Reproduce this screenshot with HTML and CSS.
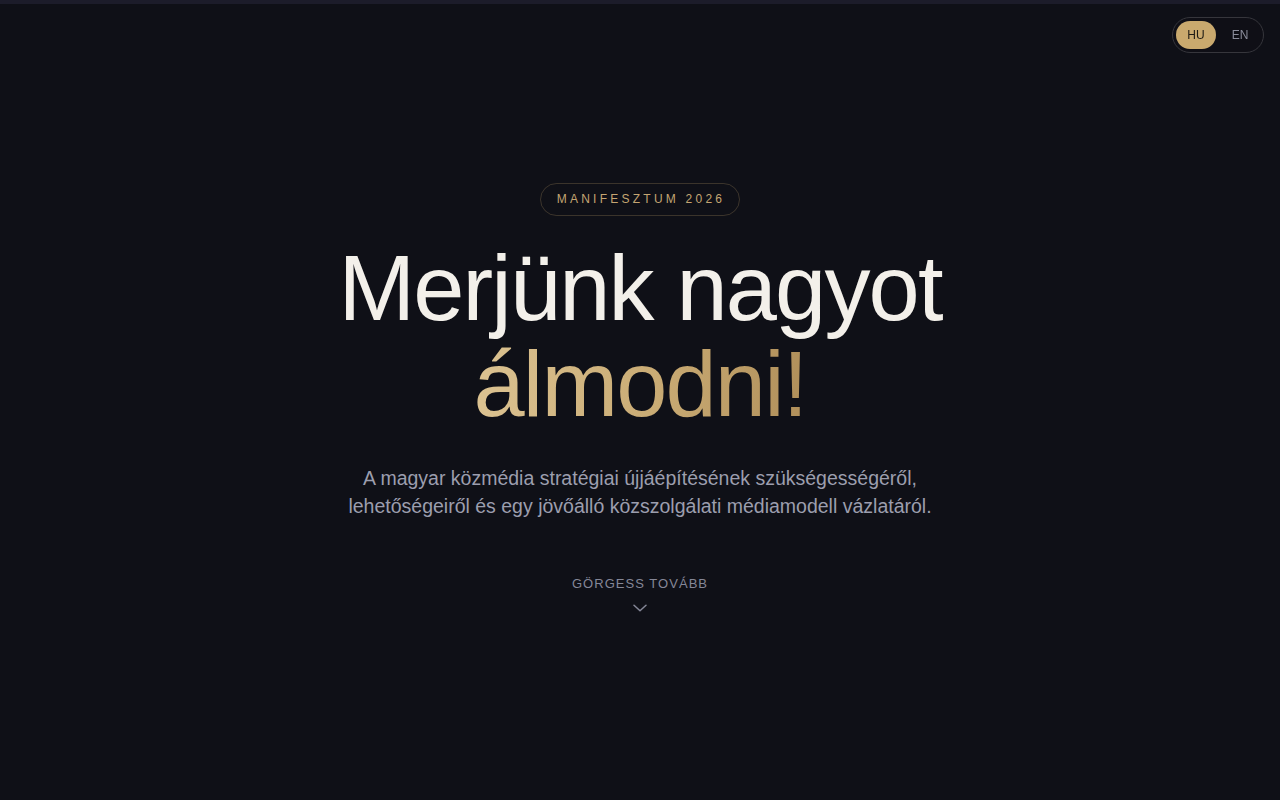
FILE: index.html
```html
<!DOCTYPE html>
<html lang="hu">
<head>
<meta charset="utf-8">
<title>Merjünk nagyot álmodni!</title>
<link rel="stylesheet" href="styles.css">
</head>
<body>
<div class="progress"></div>
<div class="lang">
  <button class="lang-btn active">HU</button>
  <button class="lang-btn">EN</button>
</div>
<main class="hero">
  <div class="badge">MANIFESZTUM 2026</div>
  <h1 class="title">Merjünk nagyot<br><span class="accent">álmodni!</span></h1>
  <p class="lead">A magyar közmédia stratégiai újjáépítésének szükségességéről,<br>lehetőségeiről és egy jövőálló közszolgálati médiamodell vázlatáról.</p>
  <div class="scroll">
    <span class="scroll-label">GÖRGESS TOVÁBB</span>
    <svg class="chev" width="14" height="8" viewBox="0 0 14 8" fill="none"><path d="M1 1.2 7 6.8 13 1.2" stroke="currentColor" stroke-width="1.5" stroke-linecap="round" stroke-linejoin="round"/></svg>
  </div>
</main>
</body>
</html>
```
FILE: styles.css
```css
* { box-sizing: border-box; }
html, body { margin: 0; padding: 0; }
body {
  background: #0f1017;
  color: #f2efe9;
  font-family: "Liberation Sans", Arial, sans-serif;
  min-height: 100vh;
}
.progress {
  position: fixed;
  top: 0; left: 0; right: 0;
  height: 4px;
  background: #1c1c2a;
}
.lang {
  position: fixed;
  top: 17px;
  right: 16px;
  display: flex;
  gap: 4px;
  padding: 3px;
  border: 1px solid #36363c;
  border-radius: 999px;
  background: rgba(15, 16, 23, 0.7);
}
.lang-btn {
  width: 40px;
  height: 28px;
  border: 0;
  border-radius: 999px;
  background: transparent;
  color: #8a8c9a;
  font-family: "Liberation Sans", Arial, sans-serif;
  font-size: 12px;
  padding: 0;
  cursor: pointer;
}
.lang-btn.active {
  background: #c9a96e;
  color: #1d1a14;
}
.hero {
  min-height: 100vh;
  display: flex;
  flex-direction: column;
  align-items: center;
  justify-content: center;
  text-align: center;
  padding-bottom: 6px;
}
.badge {
  border: 1px solid rgba(201, 169, 110, 0.24);
  border-radius: 999px;
  padding: 8px 14px 8px 16px;
  font-size: 12px;
  line-height: 15px;
  letter-spacing: 0.27em;
  color: #c4a572;
}
.title {
  margin: 24px 0 0;
  font-size: 92px;
  line-height: 96px;
  font-weight: 400;
  letter-spacing: -0.02em;
  color: #f3f0ea;
}
.accent {
  display: inline-block;
  background: linear-gradient(90deg, #dcc392 0%, #c9ab74 55%, #b08f5a 100%);
  -webkit-background-clip: text;
  background-clip: text;
  color: transparent;
}
.lead {
  margin: 32px 0 0;
  font-size: 19.5px;
  line-height: 28px;
  color: #9c9eae;
}
.scroll {
  margin-top: 56px;
  display: flex;
  flex-direction: column;
  align-items: center;
  gap: 13px;
  color: #858797;
}
.scroll-label {
  font-size: 13px;
  line-height: 15px;
  letter-spacing: 0.08em;
}
.chev { display: block; }
```
